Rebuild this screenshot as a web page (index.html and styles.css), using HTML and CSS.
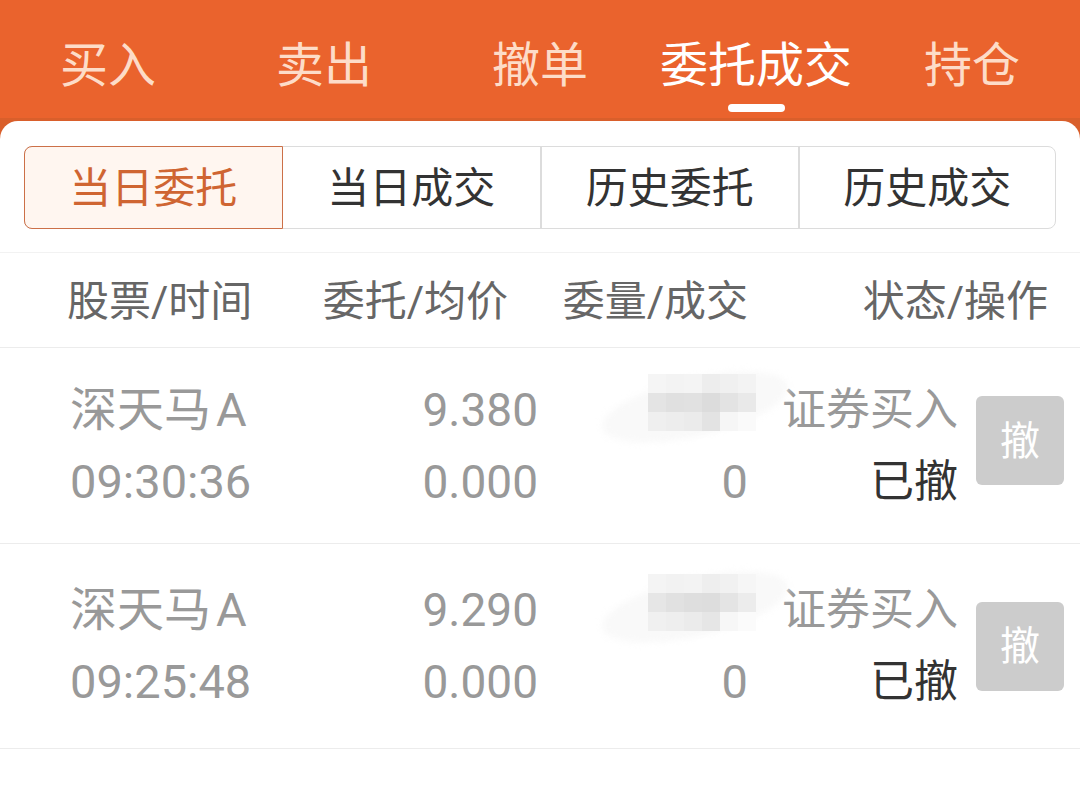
FILE: index.html
```html
<!DOCTYPE html>
<html lang="zh-CN">
<head>
    <meta charset="UTF-8">
    <meta name="viewport" content="width=device-width, initial-scale=1.0">
    <title>委托成交</title>
    <link rel="stylesheet" href="styles.css">
</head>
<body>
    <div class="tabs">
        <div class="tab">买入</div>
        <div class="tab">卖出</div>
        <div class="tab">撤单</div>
        <div class="tab active">委托成交</div>
        <div class="tab">持仓</div>
    </div>

    <div class="card">
        <div class="segments">
            <div class="segment active">当日委托</div>
            <div class="segment">当日成交</div>
            <div class="segment">历史委托</div>
            <div class="segment">历史成交</div>
        </div>

        <div class="list-head">
            <span>股票/时间</span>
            <span class="right">委托/均价</span>
            <span class="right">委量/成交</span>
            <span class="right">状态/操作</span>
        </div>

        <div class="order first">
            <div class="cell">
                <p>深天马<span class="gap">A</span></p>
                <p>09:30:36</p>
            </div>
            <div class="cell right">
                <p>9.380</p>
                <p>0.000</p>
            </div>
            <div class="cell right masked">
                <p>&nbsp;</p>
                <p>0</p>
                <div class="smudge"></div>
                <div class="mosaic">
                    <i style="background:#f5f5f5"></i><i style="background:#f3f3f3"></i><i style="background:#f4f4f4"></i><i style="background:#ededed"></i><i style="background:#f0f0f0"></i><i style="background:#f3f3f3"></i>
                    <i style="background:#e4e4e4"></i><i style="background:#e0e0e0"></i><i style="background:#e1e1e1"></i><i style="background:#dcdcdc"></i><i style="background:#e3e3e3"></i><i style="background:#e9e9e9"></i>
                    <i style="background:#efefef"></i><i style="background:#ededed"></i><i style="background:#ebebeb"></i><i style="background:#e3e3e3"></i><i style="background:#f6f6f6"></i><i style="background:#fafafa"></i>
                </div>
            </div>
            <div class="cell right">
                <p>证券买入</p>
                <p class="status">已撤</p>
            </div>
            <button class="cancel-btn">撤</button>
        </div>

        <div class="order">
            <div class="cell">
                <p>深天马<span class="gap">A</span></p>
                <p>09:25:48</p>
            </div>
            <div class="cell right">
                <p>9.290</p>
                <p>0.000</p>
            </div>
            <div class="cell right masked">
                <p>&nbsp;</p>
                <p>0</p>
                <div class="smudge"></div>
                <div class="mosaic">
                    <i style="background:#f4f4f4"></i><i style="background:#f2f2f2"></i><i style="background:#f3f3f3"></i><i style="background:#eeeeee"></i><i style="background:#f1f1f1"></i><i style="background:#f6f6f6"></i>
                    <i style="background:#e6e6e6"></i><i style="background:#e1e1e1"></i><i style="background:#dedede"></i><i style="background:#dddddd"></i><i style="background:#e4e4e4"></i><i style="background:#ececec"></i>
                    <i style="background:#f0f0f0"></i><i style="background:#eeeeee"></i><i style="background:#ebebeb"></i><i style="background:#e6e6e6"></i><i style="background:#f7f7f7"></i><i style="background:#fbfbfb"></i>
                </div>
            </div>
            <div class="cell right">
                <p>证券买入</p>
                <p class="status">已撤</p>
            </div>
            <button class="cancel-btn">撤</button>
        </div>
    </div>
</body>
</html>
```

FILE: styles.css
```css
:root {
    --orange: #ea632d;
    --orange-dark: #d95f2b;
    --tab-dim: #fddcc8;
    --active-text: #cf6532;
    --line: #ececec;
    --grey-text: #999;
}

body {
    margin: 0;
    background: linear-gradient(var(--orange) 0, var(--orange) 118px, var(--orange-dark) 118px, var(--orange-dark) 140px, #fff 140px);
    font-family: Roboto, "Noto Sans CJK SC", sans-serif;
    color: #333;
    overflow: hidden;
}

/* top tabs */
.tabs {
    display: grid;
    grid-template-columns: repeat(5, 1fr);
    height: 121px;
}

.tab {
    display: flex;
    flex-direction: column;
    align-items: center;
    padding-top: 34px;
    font-size: 48px;
    line-height: 64px;
    color: var(--tab-dim);
    box-sizing: border-box;
}

.tab.active {
    color: #fff;
}

.tab.active::after {
    content: '';
    width: 57px;
    height: 8px;
    margin-top: 6px;
    border-radius: 4px;
    background: #fff;
}

.card {
    background: #fff;
    border-radius: 18px 18px 0 0;
    min-height: calc(100vh - 121px);
    padding-top: 25px;
}

/* segment switcher */
.segments {
    display: grid;
    grid-template-columns: repeat(4, 1fr);
    margin: 0 24px;
    height: 83px;
    border: 1px solid #dcdcdc;
    border-radius: 8px;
    box-sizing: border-box;
}

.segment {
    display: flex;
    align-items: center;
    justify-content: center;
    padding-bottom: 6px;
    font-size: 42px;
    color: #333;
    border-left: 2px solid #dcdcdc;
}

.segment:first-child {
    border-left: none;
}

.segment.active {
    color: var(--active-text);
    background: #fff6f0;
    border: 1px solid #cc7048;
    border-radius: 8px 0 0 8px;
    margin: -1px 0 -1px -1px;
}

.segment.active + .segment {
    border-left: none;
}

/* list header */
.list-head {
    display: grid;
    grid-template-columns: 241px 200px 240px 300px;
    align-items: center;
    height: 96px;
    margin-top: 23px;
    padding-left: 67px;
    padding-bottom: 5px;
    box-sizing: border-box;
    border-top: 1px solid #f2f2f2;
    border-bottom: 1px solid var(--line);
    font-size: 42px;
    color: #666;
}

.right {
    text-align: right;
}

/* order rows */
.order {
    display: grid;
    grid-template-columns: 260px 208px 210px 210px 88px;
    align-items: center;
    height: 204px;
    padding: 0 16px 0 70px;
    border-bottom: 1px solid var(--line);
}

.order.first {
    height: 195px;
}

.cell p {
    margin: 0;
    font-size: 47px;
    line-height: 72px;
    color: var(--grey-text);
    white-space: nowrap;
}

.cell .gap {
    margin-left: 5px;
}

.cell:nth-child(2) p {
    font-size: 46px;
}

.cell p.status {
    color: #333;
}

.cell:nth-child(4) p {
    font-size: 44px;
}

.masked {
    position: relative;
}

.smudge {
    position: absolute;
    left: 62px;
    top: 4px;
    width: 190px;
    height: 58px;
    border-radius: 50%;
    background: #f9f9f9;
    transform: rotate(-13deg);
    filter: blur(3px);
}

.mosaic {
    position: absolute;
    left: 110px;
    top: 0;
    display: grid;
    grid-template-columns: repeat(6, 18px);
    grid-auto-rows: 19px;
}

.mosaic i {
    display: block;
}

.cancel-btn {
    grid-column: 5;
    margin-left: 18px;
    margin-bottom: 10px;
    width: 88px;
    height: 89px;
    border: none;
    border-radius: 6px;
    background: #cccccc;
    color: #fff;
    font-family: "Noto Sans CJK SC", sans-serif;
    font-size: 40px;
    padding: 0 0 6px;
}

.order:not(.first) .cancel-btn {
    margin-bottom: 0;
}
```
